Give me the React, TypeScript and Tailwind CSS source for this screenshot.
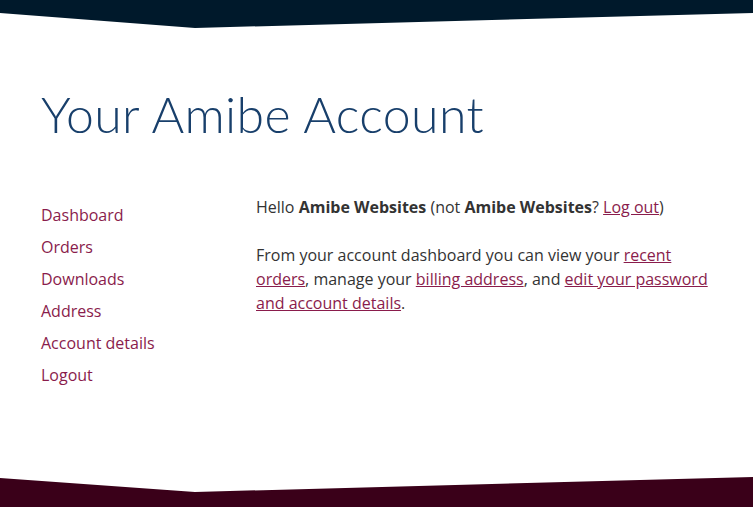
import React from 'react';

const NAV = ['Dashboard', 'Orders', 'Downloads', 'Address', 'Account details', 'Logout'];

function TopBand() {
  return (
    <svg className="block w-full h-[28px]" viewBox="0 0 753 28" preserveAspectRatio="none">
      <path d="M0 0 H753 V13 L195 28 L0 13 Z" fill="#00192b" />
    </svg>
  );
}

function BottomBand() {
  return (
    <svg className="block w-full h-[30px]" viewBox="0 0 753 30" preserveAspectRatio="none">
      <path d="M0 1 L195 15 L753 0 V30 H0 Z" fill="#3a0019" />
    </svg>
  );
}

export default function App() {
  return (
    <div className="h-[507px] w-full bg-white flex flex-col font-['Open_Sans',sans-serif] text-[16px] leading-6 text-[#333]">
      <TopBand />
      <main className="flex-1 px-[41px]">
        <h1 className="mt-[60px] font-['Lato',sans-serif] font-light text-[50px] leading-[52px] text-[#183f6b] tracking-[0.4px]">
          Your Amibe Account
        </h1>
        <div className="mt-[55px] flex">
          <nav className="w-[215px] pt-[4px] flex flex-col">
            {NAV.map((n) => (
              <a key={n} href="#" className="leading-8 text-[#8a1c4c]">
                {n}
              </a>
            ))}
          </nav>
          <div className="w-[456px]">
            <p>
              Hello <strong>Amibe Websites</strong> (not <strong>Amibe Websites</strong>?{' '}
              <a href="#" className="underline text-[#8a1c4c]">Log out</a>)
            </p>
            <p className="mt-6">
              From your account dashboard you can view your{' '}
              <a href="#" className="underline text-[#8a1c4c]">recent orders</a>, manage your{' '}
              <a href="#" className="underline text-[#8a1c4c]">billing address</a>, and{' '}
              <a href="#" className="underline text-[#8a1c4c]">edit your password and account details</a>.
            </p>
          </div>
        </div>
      </main>
      <BottomBand />
    </div>
  );
}
